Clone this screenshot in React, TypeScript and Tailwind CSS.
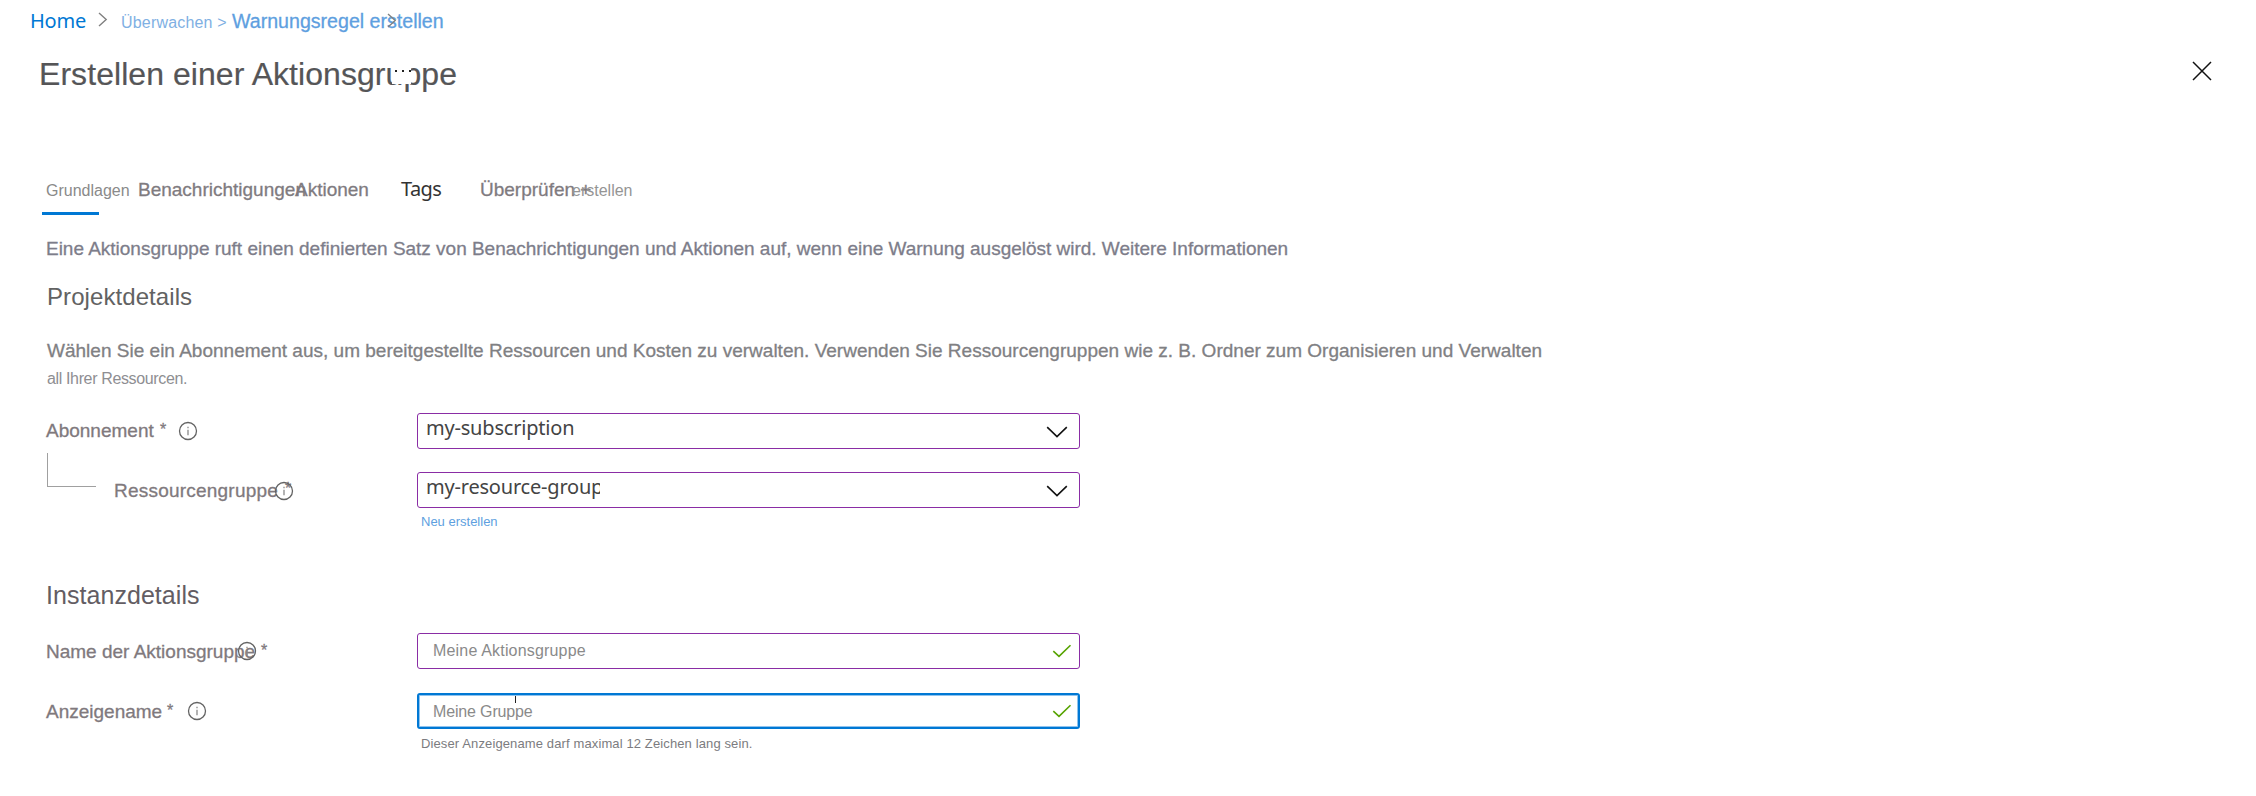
import type { ReactNode } from "react";

function Crumb({ className = "" }: { className?: string }) {
  return (
    <svg className={className} width="10" height="15" viewBox="0 0 10 15" fill="none" stroke="#808080" strokeWidth="1.4">
      <path d="M1 1l7.2 6.5L1 14" />
    </svg>
  );
}

function Info({ className = "" }: { className?: string }) {
  return (
    <svg className={className} width="20" height="20" viewBox="0 0 20 20" fill="none">
      <circle cx="10" cy="10" r="8.5" stroke="#636363" strokeWidth="1.3" />
      <path d="M10 8.8v5.4M10 5.8v1.4" stroke="#8a8a8a" strokeWidth="1.3" />
    </svg>
  );
}

function ChevronDown() {
  return (
    <svg className="mt-[12px] mr-[11px]" width="22" height="13" viewBox="0 0 22 13" fill="none" stroke="#111" strokeWidth="1.6">
      <path d="M1.2 1.2L11 10.6L20.8 1.2" />
    </svg>
  );
}

function Check({ className = "" }: { className?: string }) {
  return (
    <svg className={className} width="20" height="14" viewBox="0 0 20 14" fill="none" stroke="#57a300" strokeWidth="1.6">
      <path d="M1.3 7.2L7 12.4L18.5 1.2" />
    </svg>
  );
}

function Label({ children, className = "" }: { children: ReactNode; className?: string }) {
  return (
    <div className={"relative w-[371px] shrink-0 whitespace-nowrap text-[19px] leading-[30px] text-[#80797d] [-webkit-text-stroke:0.3px] " + className}>
      {children}
    </div>
  );
}

const body = "whitespace-nowrap text-[19px] leading-[30px] [-webkit-text-stroke:0.3px]";

export default function App() {
  return (
    <div className="h-[796px] w-[2256px] overflow-hidden bg-white pt-[6px] font-['Liberation_Sans',Arial,sans-serif]">
      <nav className="relative flex h-[30px] items-baseline whitespace-nowrap pl-[30px] leading-[30px]">
        <span className="w-[68px] font-['Noto_Sans',sans-serif] text-[20px] tracking-[-0.2px] text-[#0078d4]">Home</span>
        <Crumb className="mt-[6px] mr-[13px] self-start" />
        <span className="w-[111px] text-[16px] tracking-[0.18px] text-[#7fb0e3]">Überwachen &gt;</span>
        <span className="text-[19.6px] text-[#5e9fe0] [-webkit-text-stroke:0.3px]">Warnungsregel erstellen</span>
        <Crumb className="absolute top-[7px] left-[387px]" />
      </nav>

      <header className="mt-[18px] flex h-[40px] justify-between pr-[44px] pl-[39px]">
        <h1 className="relative whitespace-nowrap text-[32px] leading-[40px] tracking-[0.06px] text-[#555557] [-webkit-text-stroke:0.2px]">
          Erstellen einer Aktionsgruppe
          <span className="absolute top-[9px] left-[353px] flex h-[21px] w-[19px] gap-[5px] bg-white pt-[7px] pl-[3px]">
            <i className="size-[2px] bg-[#222]" />
            <i className="size-[2px] bg-[#222]" />
            <i className="size-[2px] bg-[#222]" />
          </span>
        </h1>
        <svg className="mt-[7px]" width="20" height="20" viewBox="0 0 20 20" stroke="#111" strokeWidth="1.5">
          <path d="M1 1l18 18M19 1L1 19" />
        </svg>
      </header>

      <div className="mt-[80px] flex h-[30px] items-baseline whitespace-nowrap pl-[46px] leading-[30px] text-[#7f7b7f]">
        <span className="w-[92px] text-[16px] text-[#8a8a8a]">Grundlagen</span>
        <span className="w-[157px] text-[19px] [-webkit-text-stroke:0.3px]">Benachrichtigungen</span>
        <span className="w-[106px] text-[19px] [-webkit-text-stroke:0.3px]">Aktionen</span>
        <span className="w-[79px] font-['Noto_Sans',sans-serif] text-[20px] tracking-[-0.6px] text-[#333]">Tags</span>
        <span className="w-[92px] text-[19px] [-webkit-text-stroke:0.3px]">Überprüfen +</span>
        <span className="text-[16px] text-[#959595]">erstellen</span>
      </div>
      <div className="mt-[8px] ml-[42px] h-[3px] w-[57px] bg-[#0078d4]" />

      <p className={body + " mt-[19px] ml-[46px] tracking-[-0.015px] text-[#7d7d8a]"}>
        Eine Aktionsgruppe ruft einen definierten Satz von Benachrichtigungen und Aktionen auf, wenn eine Warnung ausgelöst wird. Weitere Informationen
      </p>

      <h2 className="mt-[18px] ml-[47px] text-[24px] leading-[30px] tracking-[0.08px] text-[#626262]">Projektdetails</h2>
      <p className={body + " mt-[24px] ml-[47px] tracking-[0.01px] text-[#808083]"}>
        Wählen Sie ein Abonnement aus, um bereitgestellte Ressourcen und Kosten zu verwalten. Verwenden Sie Ressourcengruppen wie z. B. Ordner zum Organisieren und Verwalten
      </p>
      <p className="ml-[47px] text-[16px] leading-[26px] tracking-[-0.36px] text-[#8e8e92]">all Ihrer Ressourcen.</p>

      <div className="mt-[21px] flex h-[36px] pl-[46px]">
        <Label className="pt-[3px]">
          Abonnement <span className="absolute top-[2px] left-[114px] text-[16px]">*</span>
          <Info className="absolute top-[8px] left-[132px]" />
        </Label>
        <div className="flex w-[663px] justify-between rounded-[3px] border border-[#8a2da5]">
          <span className="pl-[8px] font-['Noto_Sans',sans-serif] text-[20px] leading-[28px] tracking-[-0.2px] text-[#444]">my-subscription</span>
          <ChevronDown />
        </div>
      </div>

      <div className="mt-[23px] flex h-[36px] pl-[46px]">
        <Label className="pt-[4px] pl-[68px] tracking-[0.22px]">
          <span className="absolute top-[-19px] left-[1px] h-[34px] w-[49px] border-b border-l border-[#a0a0a0]" />
          Ressourcengruppe <span className="absolute top-[2px] left-[239px] text-[16px]">*</span>
          <Info className="absolute top-[9px] left-[228px]" />
        </Label>
        <div className="flex w-[663px] justify-between rounded-[3px] border border-[#8a2da5]">
          <span className="ml-[8px] w-[174px] overflow-hidden font-['Noto_Sans',sans-serif] text-[20px] leading-[28px] tracking-[-0.2px] whitespace-nowrap text-[#444]">my-resource-group</span>
          <ChevronDown />
        </div>
      </div>
      <div className="mt-[4px] ml-[421px] text-[13px] leading-[20px] text-[#5e9fe0]">Neu erstellen</div>

      <h2 className="mt-[48px] ml-[46px] text-[25px] leading-[30px] tracking-[0.05px] text-[#635d63]">Instanzdetails</h2>
      <div className="mt-[23px] flex h-[36px] pl-[46px]">
        <Label className="pt-[4px]">
          Name der Aktionsgruppe <span className="absolute top-[3px] left-[215px] text-[16px]">*</span>
          <Info className="absolute top-[8px] left-[191px]" />
        </Label>
        <div className="flex w-[663px] justify-between rounded-[3px] border border-[#8a2da5]">
          <span className="pl-[15px] text-[16px] leading-[34px] tracking-[0.18px] text-[#8a8a8a]">Meine Aktionsgruppe</span>
          <Check className="mt-[10px] mr-[7px]" />
        </div>
      </div>

      <div className="mt-[24px] flex h-[36px] pl-[46px]">
        <Label className="pt-[4px]">
          Anzeigename <span className="absolute top-[3px] left-[121px] text-[16px]">*</span>
          <Info className="absolute top-[8px] left-[141px]" />
        </Label>
        <div className="relative flex w-[663px] justify-between rounded-[3px] border-2 border-[#0078d4] shadow-[inset_0_0_0_1px_#8fc3ee]">
          <span className="pl-[14px] text-[16px] leading-[33px] tracking-[-0.15px] text-[#8a8a8a]">Meine Gruppe</span>
          <span className="absolute top-px left-[96px] h-[7px] w-px bg-[#222]" />
          <Check className="mt-[9px] mr-[6px]" />
        </div>
      </div>
      <div className="mt-[5px] ml-[421px] text-[13px] leading-[20px] tracking-[0.12px] text-[#7c7c80]">
        Dieser Anzeigename darf maximal 12 Zeichen lang sein.
      </div>
    </div>
  );
}
